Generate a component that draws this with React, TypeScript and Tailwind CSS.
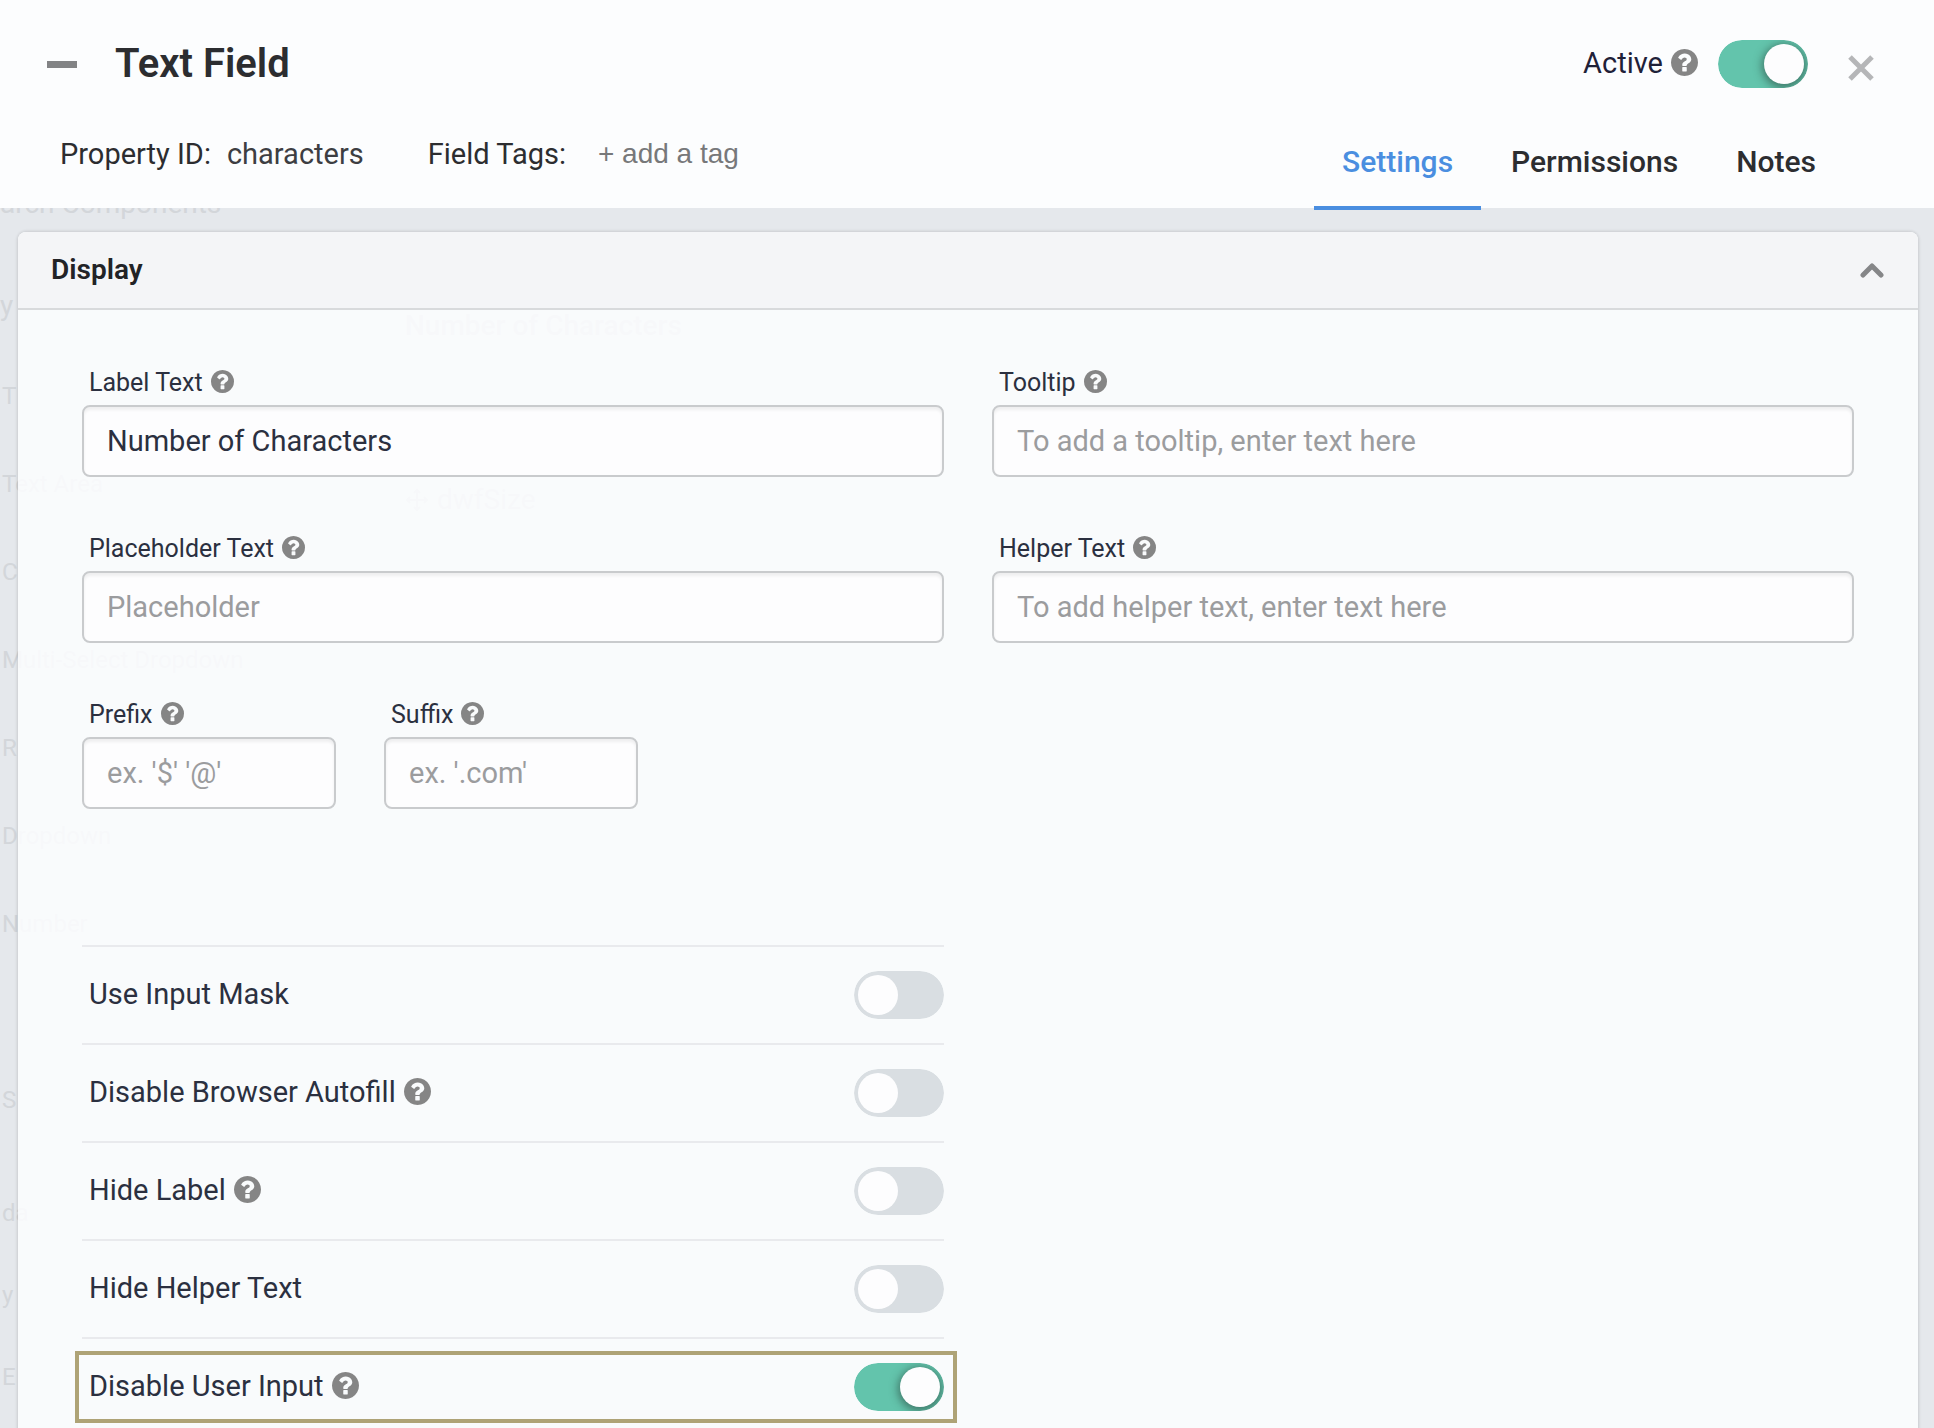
import { useState } from 'react'

type ToggleProps = {
  id: string
  checked: boolean
  onChange: () => void
}

// Items of the form builder that stay faintly visible behind the modal
const sidebarItems = ['T', 'Text Area', 'C', 'Multi-Select Dropdown', 'R', 'Dropdown', 'Number', '', 'S']
const sidebarGroups = ['da', 'y', 'E']

const tabs = ['Settings', 'Permissions', 'Notes']

const options = [
  { id: 'mask', label: 'Use Input Mask', help: false },
  { id: 'autofill', label: 'Disable Browser Autofill', help: true },
  { id: 'hideLabel', label: 'Hide Label', help: true },
  { id: 'hideHelper', label: 'Hide Helper Text', help: false },
  { id: 'disableInput', label: 'Disable User Input', help: true, highlight: true },
]

function HelpIcon({ large = false }: { large?: boolean }) {
  return (
    <svg
      aria-hidden
      viewBox="128 128 1536 1536"
      fill="currentColor"
      className={`mb-1 shrink-0 text-[#858585] ${large ? 'size-[27px]' : 'size-[23px]'}`}
    >
      <path d="M1024 1376v-192q0-14-9-23t-23-9h-192q-14 0-23 9t-9 23v192q0 14 9 23t23 9h192q14 0 23-9t9-23zm256-672q0-88-55.5-163t-138.5-116-170-41q-243 0-371 213-15 24 8 42l132 100q7 6 19 6 16 0 25-12 53-68 86-92 34-24 86-24 48 0 85.500 26t37.500 59q0 38-20 61t-68 45q-63 28-115.500 86.500t-52.500 125.500v36q0 14 9 23t23 9h192q14 0 23-9t9-23q0-19 21.500-49.500t54.500-49.500q32-18 49-28.500t46-35 44.500-48 28-60.500 12.500-81zm384 192q0 209-103 385.500t-279.500 279.500-385.500 103-385.500-103-279.500-279.500-103-385.500 103-385.500 279.500-279.500 385.500-103 385.500 103 279.500 279.500 103 385.500z" />
    </svg>
  )
}

function Toggle({ id, checked, onChange }: ToggleProps) {
  return (
    <span className="relative inline-flex h-12 w-[90px] shrink-0 overflow-hidden rounded-full">
      <input
        id={id}
        type="checkbox"
        role="switch"
        checked={checked}
        onChange={onChange}
        className="peer h-12 w-[90px] cursor-pointer appearance-none rounded-full bg-[#d9dee2] checked:bg-[#63c4ac]"
      />
      <span className="pointer-events-none absolute top-1 left-1 size-10 rounded-full bg-[#fdfdfe] peer-checked:left-[46px] peer-checked:shadow-[0_2px_8px_2px_rgba(40,70,60,0.6)]" />
    </span>
  )
}

function Field({ id, label, value, placeholder }: { id: string; label: string; value?: string; placeholder?: string }) {
  return (
    <div className="flex flex-col gap-1">
      <label htmlFor={id} className="flex h-9 items-center gap-2 pl-[7px] text-[25px] text-[#2b3040]">
        {label}
        <HelpIcon />
      </label>
      <input
        id={id}
        type="text"
        defaultValue={value}
        placeholder={placeholder}
        className="h-[72px] w-full rounded-lg border-2 border-[#c9cbcd] bg-[#fdfdfe] px-[23px] text-[29px] text-[#2b3040] shadow-[inset_0_3px_3px_rgba(0,0,0,0.06)] placeholder:text-[#9b9c9e]"
      />
    </div>
  )
}

export default function App() {
  const [activeTab, setActiveTab] = useState('Settings')
  const [active, setActive] = useState(true)
  const [open, setOpen] = useState(true)
  const [checked, setChecked] = useState<Record<string, boolean>>({ disableInput: true })

  return (
    <div className="relative isolate flex h-screen flex-col overflow-hidden bg-[#e5e8ec] font-[Roboto,sans-serif]">
      {/* Header */}
      <header className="flex h-52 shrink-0 flex-col justify-between bg-[#fcfdfe]">
        <div className="flex items-center justify-between pt-8 pr-[58px] pl-[47px]">
          <div className="flex items-center gap-[38px]">
            <span className="h-[7px] w-[30px] bg-[#828385]" />
            <h1 className="text-[40px] leading-[64px] font-semibold text-[#2c2d30]">Text Field</h1>
          </div>
          <div className="flex items-center">
            <label htmlFor="active" className="flex items-center gap-2 text-[29px] text-[#1f2138]">
              Active
              <HelpIcon large />
            </label>
            <div className="ml-5 flex">
              <Toggle id="active" checked={active} onChange={() => setActive(!active)} />
            </div>
            <button type="button" aria-label="Close" className="mt-2 ml-[38px] cursor-pointer text-[#b5b6b8]">
              <svg viewBox="0 0 30 30" className="size-[30px]" fill="none" stroke="currentColor" strokeWidth="5">
                <path d="M4 4 26 26M26 4 4 26" />
              </svg>
            </button>
          </div>
        </div>

        <div className="flex items-end justify-between pr-[90px] pl-[60px]">
          <div className="flex h-[78px] items-start text-[29px] leading-[48px] text-[#2c2d30]">
            <span>Property ID:</span>
            <span className="ml-4 text-[#3d3e42]">characters</span>
            <label htmlFor="tags" className="ml-16">
              Field Tags:
            </label>
            <input
              id="tags"
              type="text"
              placeholder="+ add a tag"
              className="ml-8 h-12 w-56 font-['Liberation_Sans',sans-serif] text-[28px] placeholder:text-[#77787a]"
            />
          </div>
          <div role="tablist" className="-mb-0.5 flex gap-0.5">
            {tabs.map((tab) => (
              <button
                key={tab}
                type="button"
                role="tab"
                aria-selected={tab === activeTab}
                onClick={() => setActiveTab(tab)}
                className="cursor-pointer border-b-4 border-transparent px-7 pb-[23px] text-[30px] leading-[42px] font-medium text-[#2c2d30] aria-selected:border-[#4a8ee0] aria-selected:text-[#4a8ee0]"
              >
                {tab}
              </button>
            ))}
          </div>
        </div>
      </header>

      {/* Builder page behind the modal */}
      <div aria-hidden className="pointer-events-none absolute inset-0 -z-10 text-2xl text-[#d3d6da]">
        <div className="absolute top-[188px] text-[28px] leading-8">arch Components</div>
        <div className="absolute top-[290px] text-[28px] leading-8">y</div>
        <div className="absolute top-[352px] left-0.5">
          {sidebarItems.map((item, index) => (
            <div key={index} className="h-[88px] leading-[88px]">
              {item}
            </div>
          ))}
          <div className="pt-7">
            {sidebarGroups.map((item) => (
              <div key={item} className="h-[82px] leading-[82px]">
                {item}
              </div>
            ))}
          </div>
        </div>
        <div className="absolute top-[310px] left-[405px] text-[28px] leading-8 font-medium">Number of Characters</div>
        <div className="absolute top-[484px] left-[405px] flex items-center gap-2 text-[28px] leading-8">
          <svg viewBox="0 0 24 24" className="size-6" fill="none" stroke="currentColor" strokeWidth="2">
            <path d="M12 2v20M2 12h20M9 5l3-3 3 3M9 19l3 3 3-3M5 9l-3 3 3 3M19 9l3 3-3 3" />
          </svg>
          dwfSize
        </div>
      </div>

      {/* Display settings */}
      <section className="mt-6 mr-4 ml-[18px] flex-1 rounded-t-lg bg-[#fdfeff]/85 shadow-[0_0_3px_1px_rgba(0,0,0,0.12)]">
        <h2>
          <button
            type="button"
            aria-expanded={open}
            onClick={() => setOpen(!open)}
            className="flex h-[78px] w-full cursor-pointer items-center justify-between rounded-t-lg border-b-2 border-[#d8dadc] bg-[#f4f5f7] pr-[34px] pl-[33px] text-[28px] font-semibold text-[#222326]"
          >
            Display
            <svg viewBox="0 0 24 16" className="h-4 w-6" fill="none" stroke="#858688" strokeWidth="5" strokeLinecap="round" strokeLinejoin="round">
              <path d="M3 13 12 4l9 9" />
            </svg>
          </button>
        </h2>

        {open && (
          <div className="pt-[55px] pr-16 pl-16">
            <div className="grid grid-cols-2 gap-x-12 gap-y-[54px]">
              <Field id="label" label="Label Text" value="Number of Characters" />
              <Field id="tooltip" label="Tooltip" placeholder="To add a tooltip, enter text here" />
              <Field id="placeholder" label="Placeholder Text" placeholder="Placeholder" />
              <Field id="helper" label="Helper Text" placeholder="To add helper text, enter text here" />
              <div className="grid grid-cols-[254px_254px] gap-12">
                <Field id="prefix" label="Prefix" placeholder="ex. '$' '@'" />
                <Field id="suffix" label="Suffix" placeholder="ex. '.com'" />
              </div>
            </div>

            <div className="mt-[136px] grid grid-cols-2 gap-x-12">
              <div>
                {options.map((option) => (
                  <div key={option.id} className="relative flex h-[98px] items-center justify-between border-t-2 border-[#e9eaed]">
                    <label htmlFor={option.id} className="flex items-center gap-2 pl-[7px] text-[29px] text-[#2b3040]">
                      {option.label}
                      {option.help && <HelpIcon large />}
                    </label>
                    <Toggle
                      id={option.id}
                      checked={!!checked[option.id]}
                      onChange={() => setChecked({ ...checked, [option.id]: !checked[option.id] })}
                    />
                    {option.highlight && (
                      <span className="pointer-events-none absolute -inset-x-[7px] top-3 -right-[13px] h-[72px] border-4 border-[#aea376]" />
                    )}
                  </div>
                ))}
              </div>
            </div>
          </div>
        )}
      </section>
    </div>
  )
}
